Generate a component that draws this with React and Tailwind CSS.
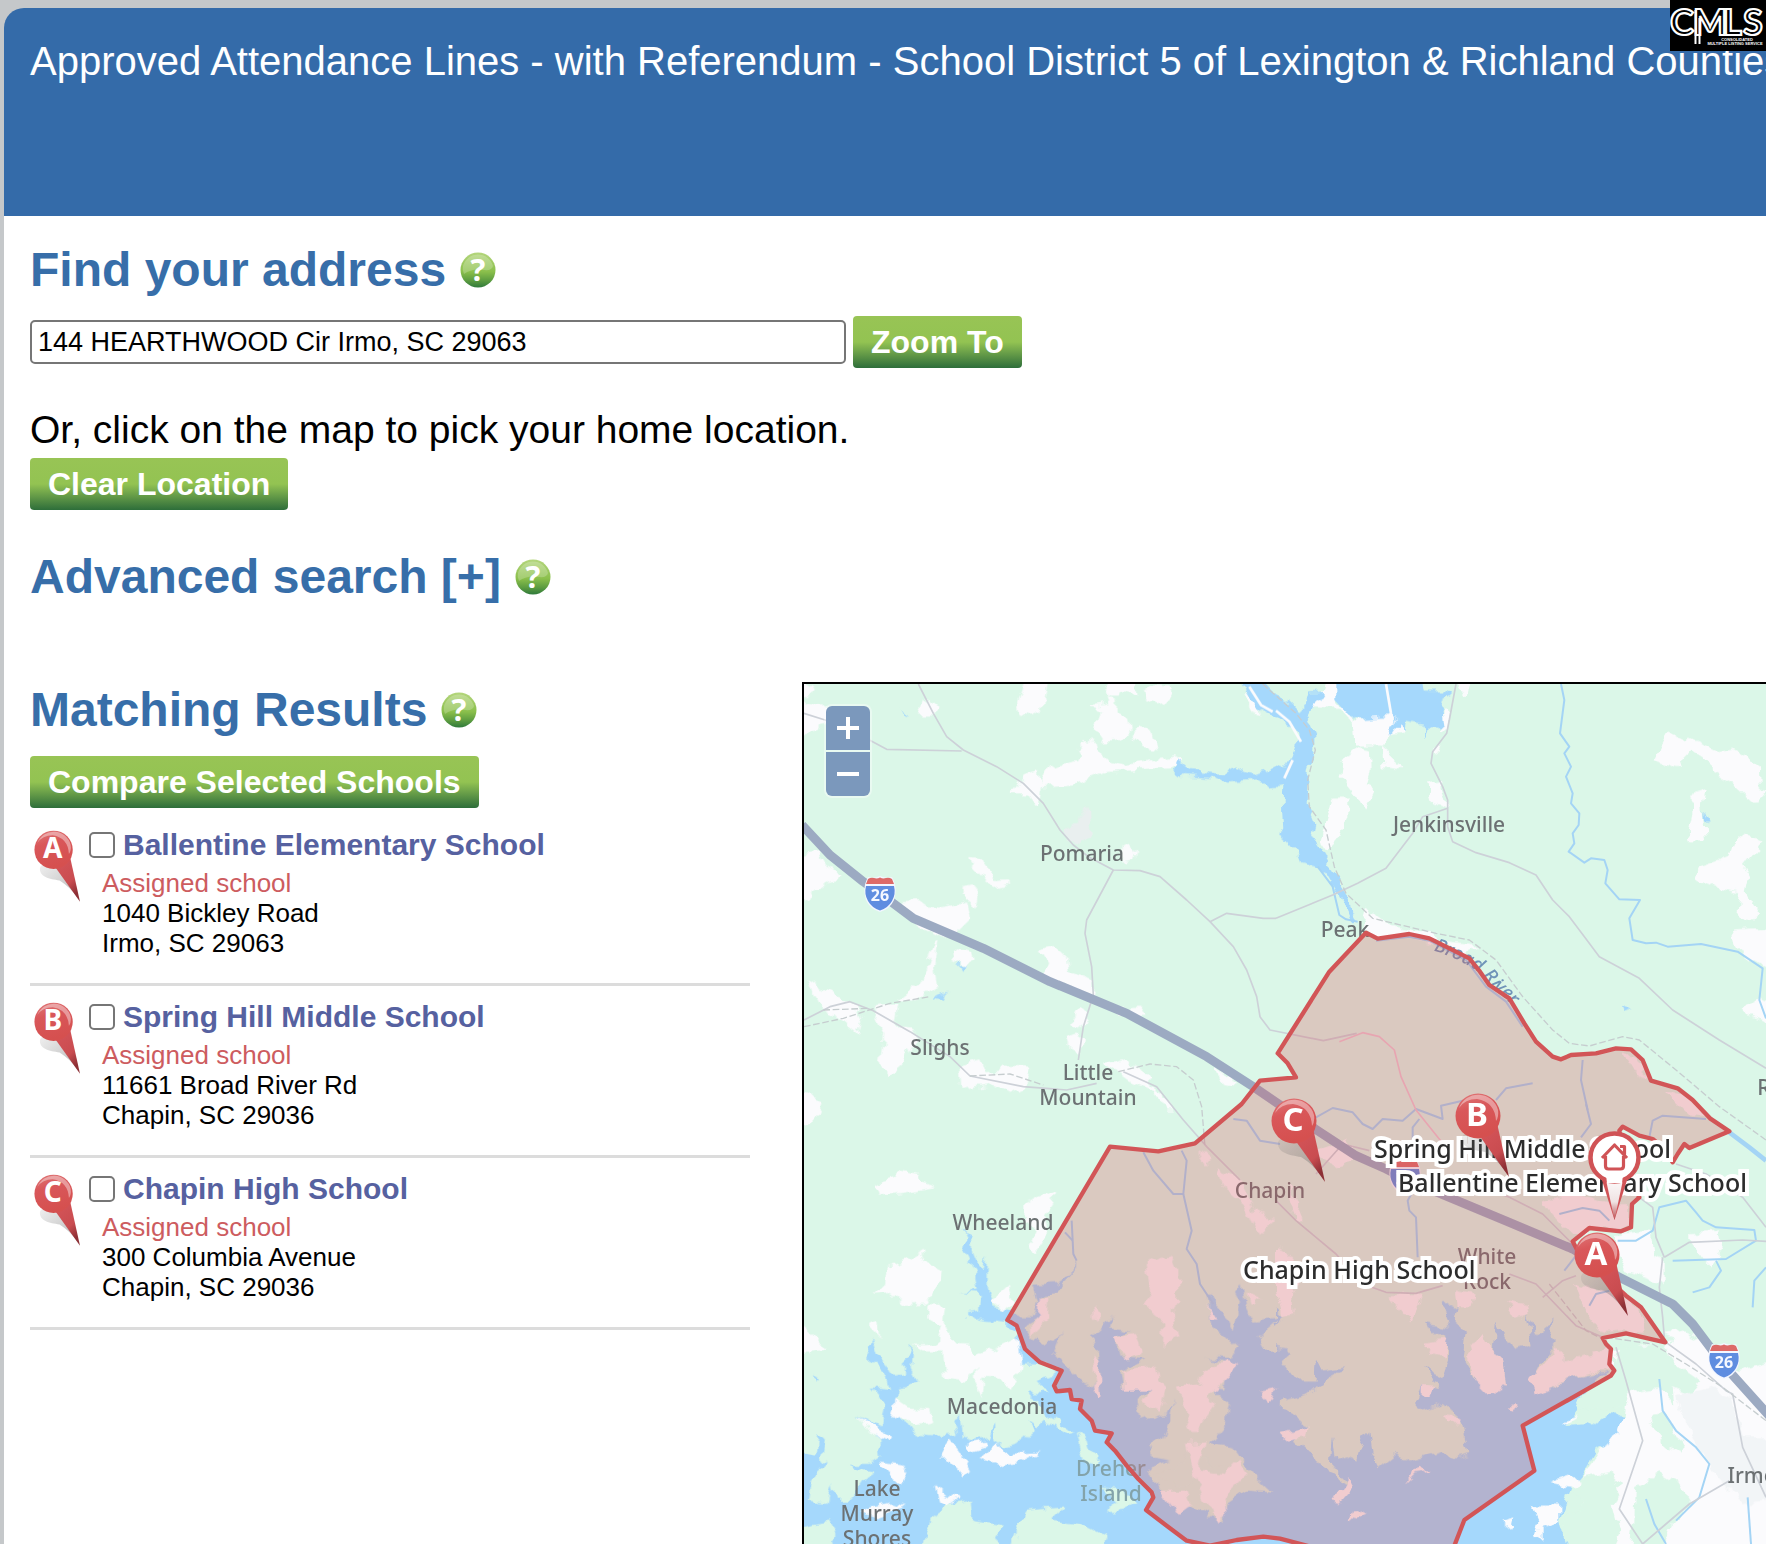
import React from "react";

function HelpIcon() {
  return (
    <button type="button" aria-label="Help" className="h-9 w-9 shrink-0">
      <svg viewBox="0 0 36 36" className="h-9 w-9">
        <defs>
          <linearGradient id="helpFill" x1="0" y1="0" x2="0" y2="1">
            <stop offset="0" stopColor="#b4d67c" />
            <stop offset="0.55" stopColor="#8abf4b" />
            <stop offset="0.8" stopColor="#5c9c40" />
            <stop offset="1" stopColor="#2f7a3b" />
          </linearGradient>
        </defs>
        <circle cx="18" cy="18" r="17.500" fill="url(#helpFill)" />
        <path d="M3 14 A15.500 15.500 0 0 1 33 14 Q32 19 24 18 Q12 16 4 22 Q2 18 3 14Z" fill="#fff" opacity="0.22" />
        <text x="18" y="29" textAnchor="middle" fontFamily="Noto Sans, sans-serif" fontWeight="700" fontSize="31" fill="#fff">?</text>
      </svg>
    </button>
  );
}

function GreenButton({ children }) {
  return (
    <button
      type="button"
      className="h-[52px] shrink-0 whitespace-nowrap rounded-[4px] bg-linear-to-b from-[#98c455] via-[#93c352] via-50% to-[#2d6e3a] px-[18px] text-[32px] font-bold leading-[36px] text-white"
    >
      {children}
    </button>
  );
}

function Heading({ children }) {
  return <h2 className="text-[48px] font-bold leading-[56px] text-[#376ea9]">{children}</h2>;
}

function Pin({ letter, className }) {
  return (
    <svg viewBox="0 0 54 84" className={className} role="img" aria-label={"Marker " + letter}>
      <defs>
        <linearGradient id="pinHead" x1="0" y1="0" x2="0.3" y2="1">
          <stop offset="0" stopColor="#e07a7a" />
          <stop offset="0.4" stopColor="#d9575a" />
          <stop offset="1" stopColor="#d5504f" />
        </linearGradient>
        <linearGradient id="pinTail" x1="0" y1="0" x2="0.5" y2="1">
          <stop offset="0" stopColor="#d7565a" />
          <stop offset="0.7" stopColor="#c94c50" />
          <stop offset="1" stopColor="#8d2f35" />
        </linearGradient>
        <linearGradient id="pinShade" x1="0" y1="0" x2="1" y2="1">
          <stop offset="0" stopColor="#666" stopOpacity="0.1" />
          <stop offset="1" stopColor="#555" stopOpacity="0.45" />
        </linearGradient>
      </defs>
      <path d="M7 44 C10 36 25 38 35 52 L53 82 C45 70 38 64 30 59 C18 57 6 55 7 44Z" fill="url(#pinShade)" />
      <path d="M24 42 L54 84 L42 30Z" fill="url(#pinTail)" />
      <circle cx="23" cy="23" r="22.500" fill="url(#pinHead)" />
      <path d="M4 15 A20.500 20.500 0 0 1 43 17 Q44 24 41 28 Q40 9 22 6 Q10 6 4 15Z" fill="#fff" opacity="0.4" />
      <text x="22" y="33" textAnchor="middle" fontFamily="Noto Sans, sans-serif" fontWeight="700" fontSize="33" fill="#fff">{letter}</text>
    </svg>
  );
}

function HomePin({ className }) {
  return (
    <svg viewBox="0 0 53 89" className={className} role="img" aria-label="Home">
      <defs>
        <linearGradient id="homeTail" x1="0" y1="0" x2="0" y2="1">
          <stop offset="0" stopColor="#fff" />
          <stop offset="0.6" stopColor="#efe3e3" />
          <stop offset="1" stopColor="#b9474b" />
        </linearGradient>
      </defs>
      <path d="M13 46 L26.500 89 L40 46Z" fill="#d05356" />
      <path d="M17 44 L26.500 89 L36 44Z" fill="url(#homeTail)" />
      <circle cx="26.500" cy="26.500" r="24" fill="#fff" stroke="#d05356" strokeWidth="4.500" />
      <path d="M18 44 H35 L34 52 H19Z" fill="#fff" />
      <path d="M14 27 L26.500 14 L39 27 M17.500 25 V35 Q17.500 38 20.500 38 H32.500 Q35.500 38 35.500 35 V25 M32 15.500 h4.500 v8" fill="none" stroke="#d05356" strokeWidth="3.200" strokeLinejoin="round" />
    </svg>
  );
}

function Shield({ className }) {
  return (
    <svg viewBox="0 0 32 36" className={className} role="img" aria-label="Interstate 26">
      <path d="M4 1 Q10 3 16 0 Q22 3 28 1 Q34 12 30 24 Q26 33 16 36 Q6 33 2 24 Q-2 12 4 1Z" fill="#f3f6ff" />
      <path d="M4 3 Q7 1 10 2 Q13 3 16 1.500 Q19 3 22 2 Q25 1 28 3 L30 8 H2Z" fill="#dd6a68" />
      <path d="M2 10 H30 Q32 18 28 25 Q24 32 16 34.500 Q8 32 4 25 Q0 18 2 10Z" fill="#5f8de0" />
      <text x="16" y="25" textAnchor="middle" fontFamily="Noto Sans, sans-serif" fontWeight="700" fontSize="16" fill="#f5f8ff">26</text>
    </svg>
  );
}

const P = ({ list, ...rest }) => list.map((points, i) => <polygon key={i} points={points} {...rest} />);
const L = ({ list, ...rest }) => list.map((points, i) => <polyline key={i} points={points} fill="none" {...rest} />);

const WATER = "#a5d8fc";
const OPEN = "#fbfbfd";
const WOODS = "#dbf7e8";

const openNW = [
  "30,30 70,50 75,60 30,80", "30,92 90,105 150,130 130,155 90,165 90,180 30,190",
  "400,95 415,90 440,110 430,135 395,135 390,115", "705,30 775,30 765,85 750,125 720,138 690,128 683,100",
  "945,30 960,75 985,75 995,60 1040,75 1035,30", "1065,65 1085,48 1130,50 1148,68 1125,92 1105,98 1070,85",
  "955,80 960,100 908,110 935,120 920,185 935,210 975,208 1000,200 1020,180 1015,140 975,130 975,95",
  "1030,200 1045,170 1080,175 1100,235 1060,230",
  "750,350 785,290 860,275 870,255 860,235 880,215 925,225 935,270 1000,285 1060,275 1155,258 1175,275 1150,292 940,305 860,340",
  "665,370 700,320 745,308 752,345 740,408 715,372", "1000,530 1015,520 1030,545 1025,570 1000,575",
  "540,560 570,565 600,605 620,632 650,630 652,640 610,652 590,635 545,580", "520,650 545,645 560,680 555,705 520,675",
  "30,555 85,545 110,590 155,620 100,640 62,665 55,690 30,700",
  "320,700 380,695 400,710 450,715 530,700 540,745 500,785 460,800 380,760", "485,835 550,845 555,865 520,885 490,870",
  "440,815 430,890 440,950 370,990 330,985 400,930 425,850",
  "755,840 790,830 830,865 835,905 910,930 905,970 840,955 760,915 780,880",
  "55,925 110,965 190,1000 215,1050 205,1095 150,1045 95,1010 70,975",
  "250,1010 320,1005 310,1070 370,1075 380,1100 350,1150 335,1185 305,1210 275,1185 285,1090",
  "845,1060 870,1015 890,1020 885,1060 860,1075", "830,1100 860,1090 880,1105 870,1145 840,1140",
  "505,1190 570,1170 585,1215 620,1210 635,1192 720,1195 700,1250 660,1270 600,1240 510,1255",
  "975,1020 1050,1015 1060,1035 1010,1040", "950,1180 1000,1170 1080,1220 1070,1240 1110,1270 1150,1320 1130,1320 1090,1260 1020,1230",
  "1280,1200 1320,1220 1335,1245 1300,1240", "30,1260 90,1290 80,1340 30,1370", "1375,75 1400,110 1410,130 1380,120",
];

const openNE = [
  "150,30 178,30 178,100 220,145 240,150 355,130 385,185 345,190 325,225 240,225 235,150 200,115 105,110 130,90",
  "250,235 280,240 282,300 270,345 290,360 265,412 235,370 190,320 200,270", "320,230 345,250 368,295 325,290",
  "170,385 215,385 215,440 190,500 155,545 135,515", "455,345 490,340 508,410 470,395", "505,115 518,115 512,180 500,180",
  "480,225 490,240 475,250", "545,30 580,30 570,78",
  "1180,190 1230,215 1245,205 1330,245 1365,238 1450,290 1452,345 1468,365 1440,402 1370,340 1310,305 1308,275 1245,235 1210,292 1135,270",
  "1235,380 1290,362 1280,410 1288,515 1245,515 1240,480 1258,400",
  "1385,495 1460,515 1420,565 1395,580 1420,620 1410,665 1450,730 1430,750 1385,740 1395,665 1330,655 1265,625 1275,590 1360,560",
  "1370,780 1490,775 1490,900 1385,840", "1405,1018 1450,985 1490,1000 1490,1065",
  "275,710 300,740 340,770 470,790 500,830 400,800 300,800 262,770", "500,815 600,825 560,850",
  "1040,1150 1080,1160 1110,1220 1070,1200", "1170,1260 1240,1280 1290,1340 1240,1330",
];

const waterNE = [
  "-105,30 -45,30 0,75 40,100 70,130 100,70 140,68 148,80 115,100 95,140 115,190 115,240 95,300 92,400 110,440 118,460 110,500 150,560 165,590 185,620 200,660 245,745 240,765 228,755 190,680 150,610 120,590 75,580 60,540 30,505 12,490 25,480 20,400 22,345 -18,350 -58,332 -158,338 -183,325 -278,318 -303,300 -293,272 -258,300 -158,312 -123,290 -88,305 -58,310 0,290 50,270 62,225 55,180 20,150 -20,130 -60,110",
  "178,30 178,90 215,130 245,145 330,140 345,130 355,150 365,140 340,185 350,190 370,160 385,185 390,155 420,160 450,165 445,200 465,165 505,170 500,120 485,100 520,75 510,65 450,65 445,30",
  "1285,420 1298,455 1287,455", "1035,1005 1065,1015 1040,1025",
];

const waterSW = [
  "25,1190 110,1200 125,1140 135,1190 180,1190 220,1130 250,1110 200,1095 180,1080 240,1080 270,1060 265,1000 205,935 250,960 275,970 285,900 245,850 300,855 290,820 240,770 225,735 245,700 260,750 310,815 345,810 345,760 370,725 365,800 385,838 330,850 320,900 350,960 375,995 430,1000 500,990 490,950 510,940 515,1000 540,1010 595,1000 610,960 610,1010 640,1030 700,1010 735,980 715,950 745,970 765,950 830,990 850,985 800,950 760,930 750,890 715,870 770,865 740,830 790,815 800,790 750,775 690,775 670,720 680,690 650,660 560,650 530,625 570,620 575,570 520,565 560,560 550,500 520,430 530,400 520,380 545,400 550,450 575,510 590,455 590,540 610,610 650,620 700,640 730,640 745,600 730,545 800,540 850,505 862,460 860,500 800,560 750,575 755,640 700,670 720,700 790,720 815,690 790,750 870,830 910,850 930,800 920,740 900,700 930,680 970,630 960,670 1025,680 975,700 985,760 1070,765 990,800 1000,860 1090,855 1040,890 1050,950 1130,930 1150,885 1140,950 1120,1000 1080,1020 1090,1060 1140,1070 1075,1090 1110,1150 1200,1210 1300,1250 1310,1200 1370,1140 1450,1165 1380,1100 1330,1030 1260,1020 1310,960 1320,900 1250,845 1300,850 1310,780 1250,762 1320,765 1340,730 1260,660 1250,570 1300,620 1330,680 1350,600 1335,570 1355,540 1365,600 1390,650 1470,640 1400,700 1420,740 1470,740 1470,1350 25,1350",
  "25,1040 75,1055 85,990 105,1010 95,1060 110,1080 60,1130 50,1200 25,1200", "75,810 90,820 80,830",
];

const openSW = [
  "258,240 310,225 330,200 385,210 395,235 435,250 340,265 270,275",
  "700,300 765,275 795,258 790,300 760,345 770,400 740,450 720,405 735,370 700,330",
  "290,490 350,470 395,443 405,475 455,500 450,540 415,595 340,600 305,570 250,575 285,540",
  "415,600 465,605 460,650 480,700 500,722 540,725 560,755 600,740 680,700 690,770 680,830 655,860 640,830 580,820 575,880 555,840 555,780 530,830 465,820 460,745 400,745 375,725 440,720 450,660 415,640",
  "230,660 265,650 270,700", "25,650 80,700 110,740 60,745 25,760", "600,590 655,545 670,590 640,620",
  "320,890 350,910 420,915 430,960 380,970 340,935 310,945", "210,940 300,1000 295,1012 230,980",
  "270,1075 340,1085 355,1110 330,1145 290,1110", "445,1060 480,1010 510,1050 540,1100 525,1118 470,1060",
  "575,1060 620,1020 640,1050 750,1045 690,1075 640,1085", "440,1145 465,1170 510,1180 470,1210 450,1195",
  "530,1020 585,1010 590,1025 540,1040", "200,1220 300,1195 340,1210 260,1240",
  "1070,480 1140,455 1165,500 1165,590 1145,620 1165,700 1115,725 1120,650 1060,605 1080,560",
  "970,700 1040,690 1055,750 1000,765", "1000,800 1100,780 1110,830 1130,850 1110,920 1060,900 1080,860 1000,860",
  "910,600 930,620 930,650 915,640", "905,755 925,770 935,880 920,885 905,800",
  "1170,850 1230,840 1240,800 1310,770 1350,780 1300,830 1250,880 1280,900 1215,990 1180,900",
  "1185,1020 1250,1015 1230,1100 1300,1110 1340,1065 1370,1110 1300,1180 1310,1230 1280,1250 1240,1180 1195,1070",
  "1115,1160 1190,1160 1200,1200 1160,1230", "750,575 775,575 770,650 720,700 720,670 745,640",
  "1230,140 1260,160 1245,180", "1280,190 1350,220 1400,330 1450,350 1410,390 1370,310 1300,250",
  "1370,560 1420,580 1380,600", "1250,600 1280,640 1260,640", "1410,870 1460,860 1440,900",
];

const woodsSW = [
  "395,1350 425,1240 480,1200 545,1190 550,1250 640,1265 615,1300 640,1350",
  "660,1350 680,1270 710,1220 820,1210 780,1250 870,1260 950,1300 930,1350",
  "25,1270 120,1255 140,1290 100,1350 25,1350", "860,990 890,1010 900,1050 930,1060 925,1085 885,1075",
  "935,1150 1000,1160 1045,1195 1000,1220 960,1225 975,1190",
  "1080,1110 1160,1100 1200,1020 1260,1080 1400,1130 1450,1165 1370,1160 1310,1200 1250,1120 1180,1150",
];

const waterSE = [
  "0,620 20,640 0,660 0,730 45,740 10,770 60,830 115,830 120,770 135,800 215,790 150,825 100,870 20,890 0,905 90,965 60,1010 130,1080 230,1150 165,1080 170,990 185,1070 220,1060 240,1070 260,1000 280,980 290,1050 310,1090 360,1050 400,1070 500,1040 540,1060 580,1050 570,1000 560,950 500,900 440,920 420,905 440,840 490,860 450,790 500,820 520,760 510,690 460,690 450,660 510,670 520,650 500,600 510,590 545,610 535,650 570,680 560,760 600,830 650,860 690,840 680,760 650,740 660,650 680,690 710,735 770,720 750,630 780,690 830,650 820,700 840,720 800,770 770,830 830,850 890,820 1000,800 940,840 900,890 910,920 870,970 960,960 1000,930 1045,935 1030,990 960,1040 930,1090 890,1140 850,1250 880,1350 0,1350",
];

const openSE = [
  "800,290 870,265 1000,300 1060,300 1060,370 940,375 900,405 820,320", "900,540 1050,580 1090,620 1110,690 1050,685 980,690 920,610",
  "110,150 210,100 240,170 180,190", "0,430 30,440 60,480 70,530 45,570 50,630 20,640 0,560", "340,580 440,575 400,655",
  "30,240 60,290 80,340 60,350", "440,710 520,700 510,760 470,750", "540,560 590,570 580,610 545,610", "690,590 750,600 755,630 720,640",
  "840,730 860,770 970,750 1000,720 1010,790 890,820 780,870 765,830", "570,760 620,690 650,740 680,760 690,840 640,870 600,830",
  "10,990 95,965 90,1000 20,1010", "385,1145 430,1080 455,1105 420,1110", "225,1225 285,1215 240,1250 218,1245",
  "160,1195 220,1120 235,1150 190,1200", "440,840 475,850 460,880 440,870", "500,930 560,940 555,960 520,960", "695,905 715,900 720,912 705,918",
  "1020,390 1120,380 1130,450 1160,460 1160,540 1050,500 1020,440",
  "1165,690 1220,680 1300,720 1380,800 1490,770 1490,1350 880,1350 860,1260 930,1200 890,1150 930,1100 1000,1000 1045,940 1060,840 1020,800 1015,740 1100,720 1170,740 1190,700",
  "1240,385 1330,380 1340,430 1300,490 1240,410", "860,970 885,940 915,935 885,955", "820,1135 880,1115 915,1130 900,1150 860,1145",
  "670,1250 715,1240 710,1265 690,1270", "770,1205 850,1205 850,1250 800,1270 800,1310 780,1290 790,1250",
];

const woodsSE = [
  "1030,720 1170,730 1200,780 1270,830 1240,870 1190,850 1195,905 1150,850 1080,860 1060,870 1050,910 900,920 920,870 1010,815",
  "1125,935 1175,930 1195,985 1225,1010 1215,1045 1160,1020",
  "1080,1150 1150,1105 1210,1140 1245,1200 1190,1260 1150,1350 1060,1350 1075,1250",
  "910,1120 1000,1100 1035,1140 1010,1200 1030,1280 1000,1350 860,1350 860,1250 930,1200 880,1160",
  "1300,1050 1350,1000 1365,1060 1330,1080",
];

function BaseMap() {
  return (
    <svg viewBox="42 42 2886 2580" preserveAspectRatio="xMinYMin slice" className="block h-[860px] w-[962px]" aria-hidden="true">
      <defs>
        <filter id="shoreline" filterUnits="userSpaceOnUse" x="0" y="0" width="2970" height="2680">
          <feTurbulence type="fractalNoise" baseFrequency="0.028" numOctaves="2" seed="4" result="noise" />
          <feDisplacementMap in="SourceGraphic" in2="noise" scale="38" xChannelSelector="R" yChannelSelector="G" />
        </filter>
      </defs>
      <rect x="42" y="42" width="2886" height="2580" fill={WOODS} />
      <g strokeLinejoin="round">
        <g filter="url(#shoreline)">
          <g fill={OPEN} stroke={OPEN} strokeWidth="4">
            <P list={openNW} />
            <g transform="translate(1458 0)"><P list={openNE} /></g>
          </g>
          <polygon points="820,480 865,455 900,410 905,500 870,520 830,505" fill="#e9efef" />
          <g fill={WATER}>
            <P list={["505,885 525,885 515,900", "435,985 470,965 460,992", "330,120 360,138 340,132"]} />
            <g transform="translate(1458 0)"><P list={waterNE} /></g>
            <g transform="translate(1458 1302)">
              <P list={openSE.slice(18, 20)} fill={OPEN} />
              <P list={woodsSE} fill={WOODS} />
              <polygon points="1200,870 1300,850 1370,880 1400,1000 1490,1000 1490,1190 1400,1200 1310,1100 1250,1000" fill="#f2f5f7" />
              <P list={waterSE} />
              <P list={openSE.slice(0, 18)} fill={OPEN} />
              <P list={openSE.slice(20)} fill={OPEN} />
            </g>
            <g transform="translate(0 1302)">
              <P list={waterSW} />
              <P list={woodsSW} fill={WOODS} />
              <P list={openSW} fill={OPEN} />
            </g>
          </g>
        </g>
        <g transform="translate(1458 0)">
          <L list={["-80,50 -45,105 -10,125", "0,122 40,155 75,215", "50,270 25,325", "330,42 345,130"]} stroke={OPEN} strokeWidth="8" />
        </g>
        <g stroke="#a4d4f5" strokeWidth="6">
          <g transform="translate(1458 0)">
            <L list={[
              "855,42 865,90 852,190 880,230 865,250 885,290 870,320 890,370 885,400 910,430 908,465 890,490 895,520 878,545 925,578 945,565 985,570 995,600 988,640 1030,688 1092,690 1060,745 1070,810 1110,820 1140,818 1175,830 1275,822 1385,845 1460,895 1450,990 1470,1045",
              "125,590 170,650 190,735 210,748 245,755", "660,1290 690,1255 770,1240", "920,1170 915,1230 935,1320",
              "300,812 400,800 460,812 570,870 630,950 690,995 740,1070",
            ]} />
          </g>
          <g transform="translate(0 1302)">
            <L list={[
              "1060,145 1090,200 1150,270 1180,270 1190,170 1175,140", "1180,270 1205,380 1190,435 1220,480 1230,540 1270,600",
              "1330,45 1370,50 1410,110 1470,120", "845,350 850,450 860,470", "825,385 848,410",
            ]} />
          </g>
          <g transform="translate(1458 1302)">
            <L list={[
              "430,225 395,290 400,320 420,340 425,460", "850,330 920,312 970,320 1000,350",
              "1025,410 1080,410 1130,380 1150,310 1230,290 1260,325 1280,350 1320,370 1435,378 1440,410 1350,465 1190,470",
              "1320,470 1335,500 1300,550 1250,565", "1470,490 1435,530 1430,610",
              "1150,825 1160,920 1200,980 1260,1030 1300,1080 1270,1180 1200,1250", "1415,1180 1425,1320", "1110,1185 1135,1260 1170,1320",
              "120,40 170,12 230,25 260,60 290,75 320,45 380,50 420,15 500,45 495,5 560,-10", "430,45 410,70 410,110", "930,0 945,60 915,100", "1120,100 1130,50 1160,35 1290,45",
              "865,500 900,455", "940,605 960,570 1000,560",
            ]} />
            <L list={["1360,85 1420,130 1470,170"]} strokeWidth="14" />
          </g>
        </g>
        <g stroke="#cdd1d8" strokeWidth="5">
          <L list={[
            "42,130 105,150 210,195 290,238 515,243",
            "385,42 430,130 470,200 520,240 620,290 700,340 760,400 810,480 850,525 895,560 970,600 1050,602 1110,620 1190,690 1260,755 1330,830 1370,900 1400,980 1410,1040 1440,1080 1600,1112 1700,1090",
            "970,600 890,750 885,790 905,890 910,975 880,1070 865,1170", "1260,755 1310,730 1420,745 1458,745",
            "42,1050 120,1010 180,995 250,1022 360,1085 480,1160 540,1218 700,1250 830,1260 920,1240",
            "1000,1205 1100,1250 1180,1350 1250,1430 1350,1530",
          ]} />
          <g transform="translate(1458 0)">
            <L list={[
              "0,745 170,675 245,640 330,595 410,490 440,440 515,415",
              "540,42 520,150 512,190 470,245 465,280 500,350 515,390 515,470 530,515 600,548 700,578 780,615 830,690 880,740 970,860 1090,925 1190,1020 1330,1110 1470,1195",
            ]} />
            <L list={["190,1115 260,1088 310,1100 355,1140 375,1220 420,1320 500,1420"]} stroke="#eec5d3" />
          </g>
          <g transform="translate(1458 1302)">
            <L list={[
              "1160,460 1150,550 1160,640 1165,700", "1165,460 1240,415 1400,408 1470,412", "1090,280 1130,310 1140,400 1165,460",
              "1020,730 1050,830 1100,1010 1030,1215 1100,1320", "1100,1320 1240,1200 1360,1130",
              "1170,715 1260,780 1350,860 1370,870 1400,1030 1470,1180", "0,290 60,350 180,450 260,540 330,565 420,568 500,545",
              "700,510 780,540 900,665 980,700", "800,580 860,530 900,515", "560,230 700,280 800,330 890,420", "120,210 200,120 280,140",
              "1200,180 1290,210 1400,280 1470,370",
            ]} />
          </g>
          <g strokeWidth="4" strokeDasharray="20 8" stroke="#c6cdcf">
            <L list={["42,1070 160,1045 300,1000 420,980", "100,1020 240,1015", "540,1218 660,1212 760,1245", "985,1205 1080,1182 1160,1190 1210,1230 1235,1310 1245,1430"]} />
            <g transform="translate(1458 0)">
              <L list={["-40,42 60,130 100,180 118,240 95,330 100,410 150,480 175,590 210,670 290,745 480,790 580,810 660,870 740,980 830,1080 880,1120 940,1128 1040,1100 1090,1110 1200,1200 1330,1310 1470,1410"]} />
            </g>
            <g transform="translate(1458 1302)">
              <L list={["990,700 1130,720 1230,780 1340,850 1470,950", "820,540 930,680 990,710"]} />
            </g>
          </g>
        </g>
        <polyline
          points="36,465 120,555 220,635 310,700 370,745 580,835 780,935 1010,1030 1250,1160 1390,1250 1580,1380 1698,1457 1788,1497 1858,1532 1978,1582 2158,1657 2348,1737 2488,1822 2648,1902 2708,1962 2798,2082 2940,2240"
          fill="none" stroke="#9caac2" strokeWidth="27"
        />
        <path id="riverName" d="M1930 842 Q2060 882 2105 950 Q2150 985 2215 1060" fill="none" />
        <text fontFamily="Noto Sans, sans-serif" fontStyle="italic" fontWeight="500" fontSize="56" fill="#6f93b8">
          <textPath href="#riverName">Broad River</textPath>
        </text>
      </g>
    </svg>
  );
}

function District() {
  return (
    <svg viewBox="42 42 2886 2580" preserveAspectRatio="xMinYMin slice" className="absolute left-0 top-0 h-[860px] w-[962px]" aria-hidden="true">
      <polygon
        points="1728,788 1763,806 1858,792 1918,805 2038,865 2070,905 2098,945 2158,985 2203,1060 2238,1115 2288,1160 2313,1168 2343,1155 2418,1150 2478,1135 2523,1138 2558,1170 2583,1232 2663,1255 2708,1290 2760,1345 2818,1384 2698,1434 2683,1422 2663,1452 2648,1477 2618,1432 2588,1407 2548,1397 2498,1370 2488,1382 2508,1502 2548,1582 2526,1602 2523,1672 2493,1684 2398,1674 2348,1714 2378,1772 2458,1832 2508,1877 2553,1912 2626,2017 2508,1990 2438,2004 2448,2022 2463,2037 2458,2082 2473,2102 2463,2117 2198,2267 2233,2402 2023,2550 1988,2640 1600,2640 1470,2606 1420,2600 1340,2610 1260,2627 1190,2612 1130,2567 1068,2520 1090,2482 1085,2467 1045,2427 1010,2387 975,2342 950,2317 965,2290 915,2282 905,2252 870,2217 875,2192 845,2187 840,2160 800,2164 792,2147 815,2102 750,2077 705,2037 680,1967 652,1950 960,1430 1105,1444 1215,1420 1355,1302 1410,1232 1518,1222 1493,1180 1463,1150 1618,905"
        fill="rgb(217,84,89)" fillOpacity="0.28" stroke="#d25557" strokeWidth="13" strokeLinejoin="round"
      />
    </svg>
  );
}

const LABEL = "absolute -translate-x-1/2 -translate-y-1/2 whitespace-nowrap text-center text-[21px] font-medium leading-[25px]";
const HALO = "absolute -translate-y-1/2 whitespace-nowrap text-[25px] font-medium leading-[30px] text-[#2c2c2c] [paint-order:stroke_fill] [-webkit-text-stroke:8px_#fff]";

function MapView() {
  return (
    <section aria-label="Map" className="relative min-w-0 flex-1 overflow-hidden border-l-2 border-t-2 border-black bg-[#dbf7e8] font-['Noto_Sans',sans-serif]">
      <BaseMap />
      <div className="text-[#6c7173]">
        <Shield className="absolute left-[60px] top-[192px] h-9 w-8" />
        <Shield className="absolute left-[904px] top-[659px] h-9 w-8" />
        <Shield className="absolute left-[585px] top-[475px] h-9 w-8" />
        <span className={LABEL + " left-[278px] top-[169px]"}>Pomaria</span>
        <span className={LABEL + " left-[645px] top-[140px]"}>Jenkinsville</span>
        <span className={LABEL + " left-[541px] top-[245px]"}>Peak</span>
        <span className={LABEL + " left-[136px] top-[363px]"}>Slighs</span>
        <span className={LABEL + " left-[284px] top-[401px]"}>Little<br />Mountain</span>
        <span className={LABEL + " left-[960px] top-[403px]"}>R</span>
        <span className={LABEL + " left-[199px] top-[538px]"}>Wheeland</span>
        <span className={LABEL + " left-[198px] top-[722px]"}>Macedonia</span>
        <span className={LABEL + " left-[73px] top-[829px]"}>Lake<br />Murray<br />Shores</span>
        <span className={LABEL + " left-[307px] top-[797px] text-[#83a3aa]"}>Dreher<br />Island</span>
        <span className={LABEL + " left-[466px] top-[506px]"}>Chapin</span>
        <span className={LABEL + " left-[683px] top-[585px]"}>White<br />Rock</span>
        <span className={LABEL + " left-[948px] top-[791px]"}>Irmo</span>
      </div>
      <District />
      <span className={HALO + " left-[570px] top-[464px]"}>Spring Hill Middle School</span>
      <span className={HALO + " left-[594px] top-[498px]"}>Ballentine Elementary School</span>
      <span className={HALO + " left-[439px] top-[585px]"}>Chapin High School</span>
      <Pin letter="C" className="absolute left-[467px] top-[414px] h-[84px] w-[54px]" />
      <Pin letter="B" className="absolute left-[651px] top-[409px] h-[84px] w-[54px]" />
      <HomePin className="absolute left-[784px] top-[447px] h-[89px] w-[53px]" />
      <Pin letter="A" className="absolute left-[770px] top-[548px] h-[84px] w-[54px]" />
      <div className="absolute left-5 top-5 flex flex-col gap-0.5 rounded-lg bg-white/40 p-0.5">
        <button type="button" aria-label="Zoom in" className="flex h-11 w-11 items-center justify-center rounded-t-md bg-[#7b98bc]">
          <svg viewBox="0 0 22 22" className="h-[22px] w-[22px]"><path d="M0 11H22M11 0V22" stroke="#fff" strokeWidth="4" /></svg>
        </button>
        <button type="button" aria-label="Zoom out" className="flex h-11 w-11 items-center justify-center rounded-b-md bg-[#7b98bc]">
          <svg viewBox="0 0 22 22" className="h-[22px] w-[22px]"><path d="M0 11H22" stroke="#fff" strokeWidth="4" /></svg>
        </button>
      </div>
    </section>
  );
}

const schools = [
  { letter: "A", name: "Ballentine Elementary School", street: "1040 Bickley Road", city: "Irmo, SC 29063" },
  { letter: "B", name: "Spring Hill Middle School", street: "11661 Broad River Rd", city: "Chapin, SC 29036" },
  { letter: "C", name: "Chapin High School", street: "300 Columbia Avenue", city: "Chapin, SC 29036" },
];

function School({ letter, name, street, city }) {
  return (
    <li className="flex gap-[9px] border-b-[3px] border-[#dcdcdc] pb-[25px] pl-1 pt-3.5">
      <Pin letter={letter} className="mt-0.5 h-[72px] w-[46px] shrink-0" />
      <div>
        <div className="flex items-center gap-2">
          <input
            type="checkbox"
            aria-label={"Select " + name}
            className="h-[26px] w-[26px] appearance-none rounded-[5px] border-2 border-[#767676] bg-white"
          />
          <a href="#school" className="text-[30px] font-bold leading-[34px] text-[#5661a0]">{name}</a>
        </div>
        <div className="mt-1.5 pl-[13px] text-[26px] leading-[30px]">
          <p className="text-[#cd5c5f]">Assigned school</p>
          <p>{street}</p>
          <p>{city}</p>
        </div>
      </div>
    </li>
  );
}

function Logo() {
  return (
    <div className="absolute right-0 top-0 bg-black">
      <svg viewBox="0 0 96 51" className="h-[51px] w-24" role="img" aria-label="CMLS">
        <g fontFamily="Lato, sans-serif" fontWeight="700" fontSize="36" fill="#000" stroke="#fff" strokeWidth="2.200">
          <text x="0" y="35">C</text>
          <text x="23" y="35">M</text>
          <text x="53" y="35">L</text>
          <text x="73" y="35">S</text>
        </g>
        <path d="M25.500 10V44M29.500 18V44" stroke="#fff" strokeWidth="2" />
        <g fontFamily="Liberation Sans, sans-serif" fontWeight="700" fill="#fff" textAnchor="middle">
          <text x="67" y="41" fontSize="4">CONSOLIDATED</text>
          <text x="65" y="45" fontSize="4">MULTIPLE LISTING SERVICE</text>
        </g>
      </svg>
    </div>
  );
}

export default function App() {
  return (
    <div className="relative flex min-h-screen flex-col overflow-hidden bg-[#c5c8ca] pl-1 pt-2 font-['Liberation_Sans',Arial,sans-serif] text-black">
      <header className="h-[208px] overflow-hidden rounded-tl-[20px] bg-[#346ba9] pl-[26px] pt-[29px]">
        <h1 className="whitespace-nowrap text-[40px] leading-[48px] text-white">
          Approved Attendance Lines - with Referendum - School District 5 of Lexington &amp; Richland Counties
        </h1>
      </header>
      <Logo />
      <main className="flex flex-1 flex-col bg-white pl-[26px] pt-[26px]">
        <div className="flex items-center gap-3.5">
          <Heading><label htmlFor="address">Find your address</label></Heading>
          <HelpIcon />
        </div>
        <form className="mt-[18px] flex items-center gap-[7px]">
          <input
            id="address"
            type="text"
            defaultValue="144 HEARTHWOOD Cir Irmo, SC 29063"
            className="h-11 w-full max-w-[816px] rounded-[5px] border-2 border-[#767676] bg-white px-1.5 text-[27px] leading-[30px]"
          />
          <GreenButton>Zoom To</GreenButton>
        </form>
        <p className="mt-[38px] text-[39px] leading-[48px]">Or, click on the map to pick your home location.</p>
        <div className="mt-1">
          <GreenButton>Clear Location</GreenButton>
        </div>
        <div className="mt-[39px] flex items-center gap-3.5">
          <Heading><button type="button">Advanced search [+]</button></Heading>
          <HelpIcon />
        </div>
        <div className="mt-[77px] flex flex-1 items-stretch gap-[52px]">
          <section className="w-[720px] shrink-0">
            <div className="flex items-center gap-3.5">
              <Heading>Matching Results</Heading>
              <HelpIcon />
            </div>
            <div className="mt-[18px]">
              <GreenButton>Compare Selected Schools</GreenButton>
            </div>
            <ul className="mt-1.5">
              {schools.map((s) => <School key={s.letter} {...s} />)}
            </ul>
          </section>
          <MapView />
        </div>
      </main>
    </div>
  );
}
